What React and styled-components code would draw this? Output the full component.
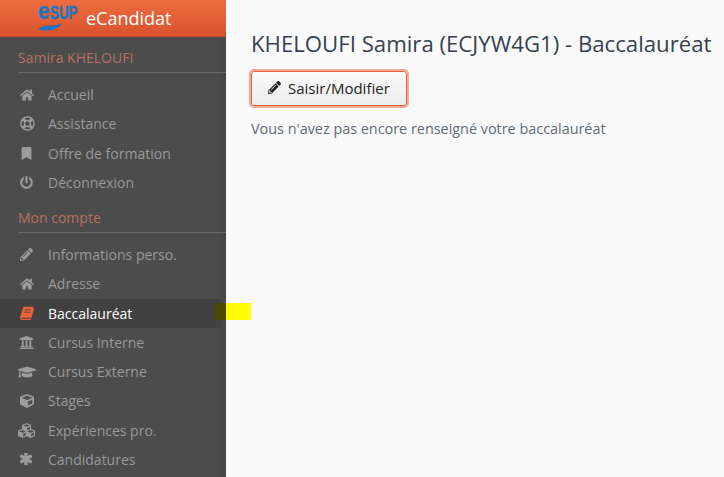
import React from 'react';
import styled, { createGlobalStyle } from 'styled-components';
import { FaHome, FaRegLifeRing, FaBookmark, FaPowerOff, FaPencilAlt, FaUniversity, FaGraduationCap, FaCube, FaCubes, FaAsterisk } from 'react-icons/fa';

const Global = createGlobalStyle`
  html, body { margin: 0; padding: 0; height: 100%; background: #fafafa; }
  #root { height: 100%; }
  * { box-sizing: border-box; }
`;
const Page = styled.div`
  position: relative; display: flex; width: 724px; height: 477px; overflow: hidden;
  font-family: "Open Sans", sans-serif; background: #fafafa;
`;
const Side = styled.aside`
  width: 226px; flex: none; background: #4c4c4c; display: flex; flex-direction: column;
  box-shadow: inset -10px 0 10px -10px rgba(0,0,0,.12);
`;
const Brand = styled.header`
  height: 37px; flex: none; display: flex; align-items: center; gap: 6px;
  padding-left: 38px;
  background: linear-gradient(#ee6c40, #d9532e); color: #fff; font-size: 18px;
  border-bottom: 1px solid #c64c2a;
`;
const SectionTitle = styled.div`
  margin-left: 18px; height: 36px; flex: none; display: flex; align-items: flex-end; padding-bottom: 5px;
  border-bottom: 1px solid #6a6a6a; color: #b9705f; font-size: 14px; line-height: 19px;
`;
const Menu = styled.nav`
  display: flex; flex-direction: column; padding-top: 7px;
`;
const Item = styled.div`
  display: flex; align-items: center; height: 29.25px; padding-left: 18px; font-size: 14px;
  color: ${p => p.$active ? '#fff' : '#9a9a9a'};
  background: ${p => p.$active ? 'linear-gradient(to right, #414141 97%, #4c4c4c)' : 'transparent'};
`;
const IconSlot = styled.span`
  width: 30px; flex: none; display: flex; align-items: center; padding-left: 2px;
  margin-left: ${p => p.$shift || 0}px;
  margin-right: ${p => -(p.$shift || 0)}px;
  font-size: ${p => p.$size || 14}px;
  color: ${p => p.$active ? '#e8623a' : '#9c9c9c'};
  svg { display: block; }
`;
const Main = styled.main`
  flex: 1; padding: 26px 0 0 25px; min-width: 0;
`;
const Title = styled.h1`
  margin: 0; font-weight: 400; font-size: 22.2px; line-height: 36px; color: #36424e; white-space: nowrap;
`;
const Button = styled.button`
  margin-top: 9px; display: flex; align-items: center; gap: 7px; width: 156px; height: 35px;
  padding: 0 0 2px 16px; font: 15px "Open Sans", sans-serif; color: #222;
  background: linear-gradient(#fbfbfb, #ececec);
  border: 1px solid #e8623a; border-radius: 3px; box-shadow: 0 0 0 2px #f3a997;
`;
const Note = styled.p`
  margin: 13px 0 0; font-size: 14.4px; line-height: 20px; color: #5f6c78;
`;
const Marker = styled.div`
  position: absolute; left: 215px; top: 303px; width: 36px; height: 17px;
  background: linear-gradient(to right, #4a4800 0, #4a4800 11px, #ffff00 11px);
`;
const LogoMark = styled.svg`
  flex: none; overflow: visible;
`;
const Logo = () => (
  <LogoMark width="42" height="32" viewBox="0 0 42 32" aria-hidden="true">
    <g fontFamily="'Liberation Sans', sans-serif" fontWeight="700" fill="#1d74c0" stroke="#1d74c0" strokeWidth="0.4">
      <text transform="translate(0 17) scale(.9 1.05)" fontSize="23">e</text>
      <text transform="translate(12 17) scale(.74 1)" fontSize="18">SUP</text>
    </g>
    <path d="M0 27 C8 21 14 26 24 21 C21 26 14 30 3 28 Z" fill="#1d74c0" />
  </LogoMark>
);
const BookIcon = () => (
  <svg width="14" height="14" viewBox="0 0 14 14" fill="currentColor" aria-hidden="true">
    <path d="M4 .8h8.6c.9 0 1.3.6 1 1.4l-2.5 8.3c-.3.9-.9 1.3-1.700 1.300H2.600c-.7 0-1 .5-.5.9h8.300l3-9.600.6.500-3 9.700c-.1.300-.4.600-.8.600H2.200C1 13.900 0 13 0 11.800c0-.3 0-.5.1-.8L3 2C3.200 1.300 3.500.8 4 .8zm1 2.700-.2.800h6l.2-.800zm-.7 2.200-.2.800h6l.2-.800z" fillRule="evenodd" />
  </svg>
);
const ThickAsterisk = () => <FaAsterisk stroke="currentColor" strokeWidth="60" />;
const first = [
  [FaHome, 'Accueil', 14], [FaRegLifeRing, 'Assistance', 15], [FaBookmark, 'Offre de formation', 13], [FaPowerOff, 'Déconnexion', 13],
];
const second = [
  [FaPencilAlt, 'Informations perso.', 13], [FaHome, 'Adresse', 14], [BookIcon, 'Baccalauréat', 14, true],
  [FaUniversity, 'Cursus Interne', 15, false, -1], [FaGraduationCap, 'Cursus Externe', 18, false, -2], [FaCube, 'Stages', 14], [FaCubes, 'Expériences pro.', 17, false, -2], [ThickAsterisk, 'Candidatures', 12],
];
const Row = ({ icon: Icon, label, size, active, shift }) => (
  <Item $active={active}><IconSlot $size={size} $active={active} $shift={shift}><Icon /></IconSlot>{label}</Item>
);
export default function App() {
  return (
    <Page>
      <Global />
      <Side>
        <Brand><Logo />eCandidat</Brand>
        <SectionTitle>Samira KHELOUFI</SectionTitle>
        <Menu>{first.map(([i, l, s]) => <Row key={l} icon={i} label={l} size={s} />)}</Menu>
        <SectionTitle>Mon compte</SectionTitle>
        <Menu>{second.map(([i, l, s, a, sh]) => <Row key={l} icon={i} label={l} size={s} active={a} shift={sh} />)}</Menu>
      </Side>
      <Main>
        <Title>KHELOUFI Samira (ECJYW4G1) - Baccalauréat</Title>
        <Button><FaPencilAlt size={13} />Saisir/Modifier</Button>
        <Note>Vous n'avez pas encore renseigné votre baccalauréat</Note>
      </Main>
      <Marker />
    </Page>
  );
}
